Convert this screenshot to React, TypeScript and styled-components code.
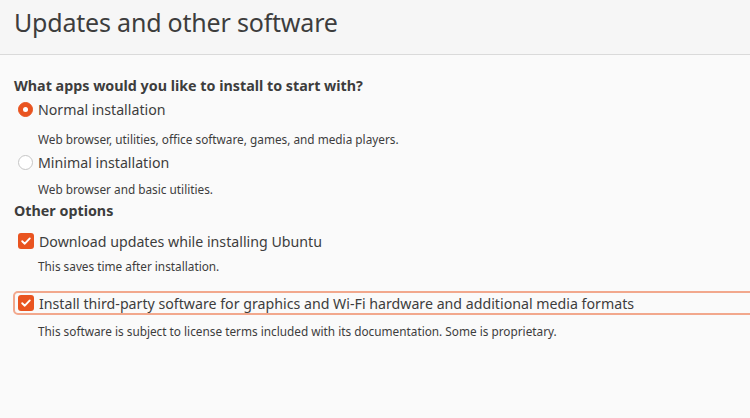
import React from "react";
import styled, { createGlobalStyle } from "styled-components";

const Global = createGlobalStyle`
  html, body { margin: 0; padding: 0; background: #fafafa; overflow: hidden; }
  body { font-family: "Noto Sans", "Open Sans", sans-serif; color: #3d3d3d; }
  #root { width: 750px; height: 418px; }
`;

const Page = styled.div`
  width: 750px;
  height: 418px;
  display: flex;
  flex-direction: column;
  background: #fafafa;
  overflow: hidden;
`;

const Header = styled.header`
  height: 55px;
  box-sizing: border-box;
  padding: 4px 0 0 14px;
  background: #f6f6f6;
  border-bottom: 1px solid #dadada;
`;

const Title = styled.h1`
  margin: 0;
  font-weight: 400;
  font-size: 25px;
  line-height: 36px;
  letter-spacing: -0.2px;
  color: #3d3d3d;
`;

const Body = styled.main`
  display: flex;
  flex-direction: column;
  padding: 21px 0 0 14px;
`;

const SectionTitle = styled.div<{ $mt?: number }>`
  margin-top: ${(p) => p.$mt ?? 0}px;
  font-weight: 700;
  font-size: 14.3px;
  line-height: 20px;
  height: 20px;
`;

const Option = styled.label<{ $mt: number; $focused?: boolean }>`
  display: flex;
  align-items: center;
  gap: 5px;
  box-sizing: border-box;
  margin-top: ${(p) => p.$mt}px;
  font-size: 14.2px;
  height: 24px;
  margin-left: ${(p) => (p.$focused ? "-1px" : "0")};
  padding-left: ${(p) => (p.$focused ? "3px" : "4px")};
  width: ${(p) => (p.$focused ? "760px" : "auto")};
  border: ${(p) => (p.$focused ? "2px solid #f2a88d" : "none")};
  border-radius: 5px;
`;

const Radio = styled.span<{ $on?: boolean }>`
  width: 15px;
  height: 15px;
  box-sizing: border-box;
  border-radius: 50%;
  flex: none;
  display: flex;
  align-items: center;
  justify-content: center;
  background: ${(p) => (p.$on ? "#e95420" : "#ffffff")};
  border: 1px solid ${(p) => (p.$on ? "#e95420" : "#c6c6c6")};
  &::after {
    content: "";
    display: ${(p) => (p.$on ? "block" : "none")};
    width: 5px;
    height: 5px;
    border-radius: 50%;
    background: #ffffff;
  }
`;

const Box = styled.span`
  width: 16px;
  height: 16px;
  border-radius: 3px;
  background: #e95420;
  flex: none;
  display: flex;
  align-items: center;
  justify-content: center;
`;

const Hint = styled.div<{ $mt: number }>`
  margin: ${(p) => p.$mt}px 0 0 24px;
  font-size: 11.8px;
  line-height: 16px;
  height: 16px;
`;

const Check = () => (
  <Box>
    <svg width="12" height="12" viewBox="0 0 12 12" fill="none">
      <path d="M2.2 6.2 L4.8 8.7 L9.8 3.4" stroke="#fff" strokeWidth="1.9" strokeLinecap="round" strokeLinejoin="round" />
    </svg>
  </Box>
);

export default function App() {
  return (
    <Page>
      <Global />
      <Header>
        <Title>Updates and other software</Title>
      </Header>
      <Body>
        <SectionTitle>What apps would you like to install to start with?</SectionTitle>
        <Option $mt={1}>
          <Radio $on />
          Normal installation
        </Option>
        <Hint $mt={10}>Web browser, utilities, office software, games, and media players.</Hint>
        <Option $mt={3}>
          <Radio />
          Minimal installation
        </Option>
        <Hint $mt={7}>Web browser and basic utilities.</Hint>
        <SectionTitle $mt={4}>Other options</SectionTitle>
        <Option $mt={8}>
          <Check />
          Download updates while installing Ubuntu
        </Option>
        <Hint $mt={5}>This saves time after installation.</Hint>
        <Option $mt={17} $focused>
          <Check />
          Install third-party software for graphics and Wi-Fi hardware and additional media formats
        </Option>
        <Hint $mt={8}>This software is subject to license terms included with its documentation. Some is proprietary.</Hint>
      </Body>
    </Page>
  );
}
